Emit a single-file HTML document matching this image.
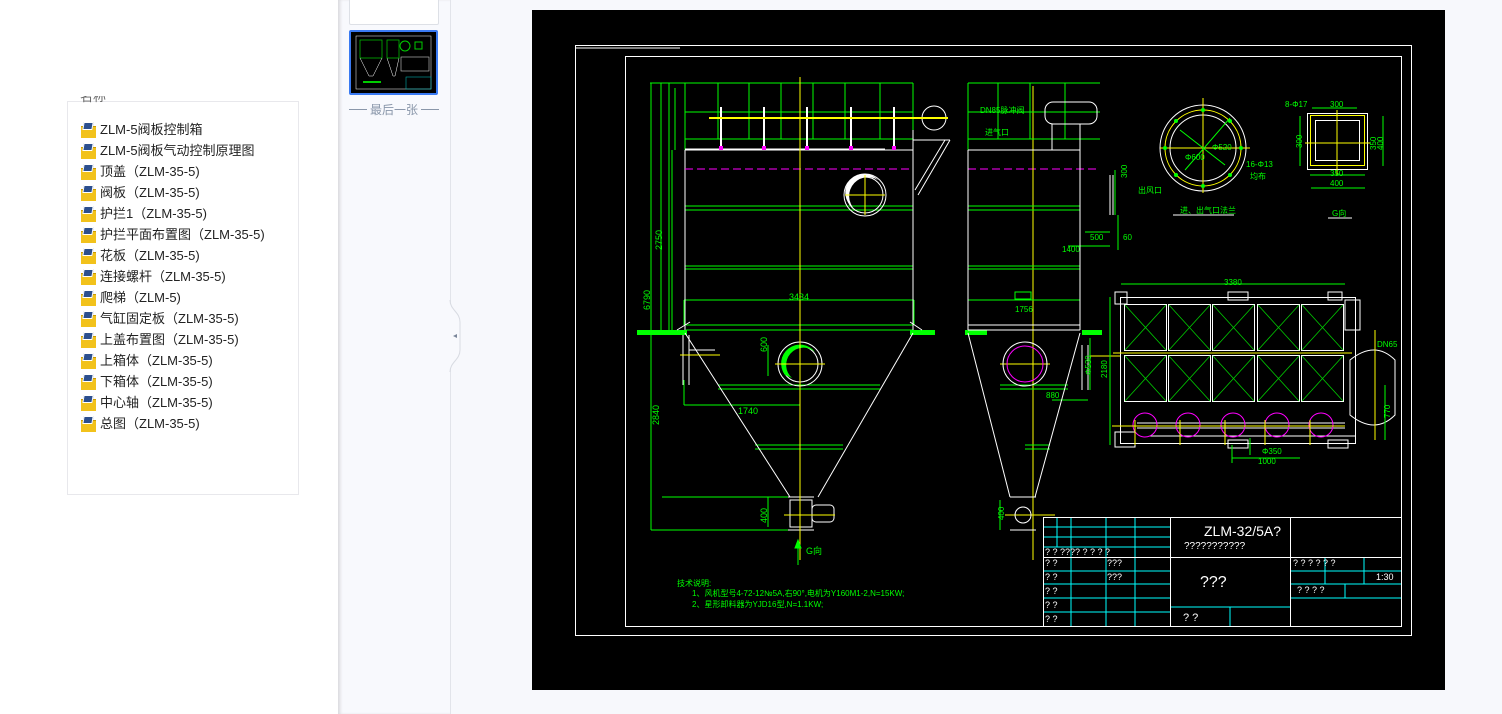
<!DOCTYPE html>
<html><head><meta charset="utf-8"><style>
body{margin:0;width:1502px;height:714px;overflow:hidden;background:#f7f8fc;font-family:"Liberation Sans","Noto Sans CJK SC",sans-serif;position:relative}
.left{position:absolute;left:0;top:0;width:338px;height:714px;background:#fff}
.card{position:absolute;left:67px;top:101px;width:230px;height:392px;border:1px solid #e8e8ec;background:#fff}
.hdr{position:absolute;left:80px;top:96px;width:40px;height:8px;overflow:hidden;font-size:13px;color:#666;line-height:13px}
.hdr span{position:relative;top:-6px}
.item{position:absolute;left:81px;height:20px;font-size:13px;color:#222;line-height:20px;white-space:nowrap}
.item i{display:inline-block;width:15px;height:15px;vertical-align:-3px;margin-right:4px;position:relative}
.item i:before{content:"";position:absolute;left:0;top:4px;width:15px;height:11px;background:#f2c21b;border-top:1px solid #c99a00}
.item i:after{content:"";position:absolute;left:2px;top:0;width:8px;height:6px;background:#2c4f8e;border:1px solid #fff;transform:skewX(-10deg)}
.thumbs{position:absolute;left:338px;top:0;width:112px;height:714px;background:#f8f9fd;box-shadow:inset 3px 0 3px -1px #d8d8dc}
.sep{position:absolute;left:450px;top:0;width:1px;height:714px;background:#e2e4ea}
</style></head><body>
<div class="left">
 <div class="card"></div>
 <div class="hdr"><span>名称</span></div>
 <div class="item" style="top:120px"><i></i>ZLM-5阀板控制箱</div>
 <div class="item" style="top:141px"><i></i>ZLM-5阀板气动控制原理图</div>
 <div class="item" style="top:162px"><i></i>顶盖（ZLM-35-5)</div>
 <div class="item" style="top:183px"><i></i>阀板（ZLM-35-5)</div>
 <div class="item" style="top:204px"><i></i>护拦1（ZLM-35-5)</div>
 <div class="item" style="top:225px"><i></i>护拦平面布置图（ZLM-35-5)</div>
 <div class="item" style="top:246px"><i></i>花板（ZLM-35-5)</div>
 <div class="item" style="top:267px"><i></i>连接螺杆（ZLM-35-5)</div>
 <div class="item" style="top:288px"><i></i>爬梯（ZLM-5)</div>
 <div class="item" style="top:309px"><i></i>气缸固定板（ZLM-35-5)</div>
 <div class="item" style="top:330px"><i></i>上盖布置图（ZLM-35-5)</div>
 <div class="item" style="top:351px"><i></i>上箱体（ZLM-35-5)</div>
 <div class="item" style="top:372px"><i></i>下箱体（ZLM-35-5)</div>
 <div class="item" style="top:393px"><i></i>中心轴（ZLM-35-5)</div>
 <div class="item" style="top:414px"><i></i>总图（ZLM-35-5)</div>
</div>
<div class="thumbs">
 <div style="position:absolute;left:11px;top:-2px;width:88px;height:25px;background:#fff;border:1px solid #dde0e6;border-radius:2px"></div>
 <div style="position:absolute;left:11px;top:30px;width:85px;height:61px;background:#000;border:2px solid #3a7af2;border-radius:2px">
  <svg width="85" height="61" viewBox="0 0 85 61"><rect x="5" y="4" width="75" height="53" fill="none" stroke="#fff" stroke-width=".5"/><rect x="9" y="8" width="22" height="18" fill="none" stroke="#0c0" stroke-width=".7"/><path d="M9 26 L18 44 L22 44 L31 26 M36 26 L42 44 L44 44 L48 26" stroke="#fff" stroke-width=".5" fill="none"/><rect x="36" y="8" width="12" height="18" fill="none" stroke="#0c0" stroke-width=".7"/><circle cx="54" cy="14" r="5" fill="none" stroke="#0c0"/><rect x="64" y="10" width="7" height="7" fill="none" stroke="#0c0"/><rect x="50" y="25" width="28" height="14" fill="none" stroke="#ccc" stroke-width=".6"/><rect x="55" y="45" width="25" height="12" fill="none" stroke="#0aa" stroke-width=".6"/><path d="M12 50 H30" stroke="#0c0" stroke-width="2"/></svg>
 </div>
 <div style="position:absolute;left:10px;top:102px;width:92px;text-align:center;font-size:12px;color:#8a97aa;line-height:16px"><span style="display:inline-block;width:18px;height:1px;background:#8a97aa;vertical-align:4px"></span> 最后一张 <span style="display:inline-block;width:18px;height:1px;background:#8a97aa;vertical-align:4px"></span></div>
</div>
<div class="sep"></div>
<svg style="position:absolute;left:448px;top:300px" width="16" height="80"><path d="M2 0 C2 10 12 12 12 22 V50 C12 60 2 62 2 72" fill="#f8f9fd" stroke="#d8dbe2"/><path d="M9 34 L5 36 L9 38Z" fill="#7a8599"/></svg>

<svg style="position:absolute;left:532px;top:10px" width="913" height="680" viewBox="532 10 913 680" font-family="Liberation Sans, Noto Sans CJK SC, sans-serif">
<rect x="532" y="10" width="913" height="680" fill="#000"/>
<g fill="none" stroke="#fff" stroke-width="1">
<rect x="575.5" y="45.5" width="836" height="590"/>
<rect x="625.5" y="56.5" width="776" height="570"/>
<path d="M575 48 H680"/>
</g>
<g fill="none" stroke="#0f0" stroke-width="1">
<path d="M650 83 H913 M685 112 H913 M685 139 H913"/>
<path d="M718 83V139 M749 83V139 M781 83V139 M813 83V139 M845 83V139 M880 83V139 M913 83V139 M685 83V150"/>
<path d="M651 83V530 M661 83V330 M669 83V330 M672 150V330 M675 88V150"/>
<path d="M685 206H913 M685 210H913 M685 266H913 M685 269H913 M684 300H914 M684 300V325 M914 300V325"/>
<path d="M718 385H880 M718 389H880 M755 445H843 M755 449H843"/>
<path d="M651 530H790 M662 497H790 M684 405H800 M684 380V405 M768 345V376 M768 497V527"/>
<path d="M686 325H913 M686 330H913"/>
</g>
<g fill="#0f0"><rect x="637" y="330" width="50" height="5"/><rect x="910" y="330" width="25" height="5"/><rect x="965" y="330" width="22" height="5"/><rect x="1082" y="330" width="20" height="5"/></g>
<g fill="none" stroke="#fff" stroke-width="1">
<path d="M685 150H913 M685 150V330 M913 150V330 M685 149H885"/>
<path d="M913 130V195 M913 140H950 M950 140L918 195 M945 140L915 190"/>
<circle cx="934" cy="118" r="12"/>
<circle cx="865" cy="195" r="21"/><circle cx="865" cy="195" r="18"/>
<path d="M685 333L790 497 M913 333L818 497 M677 330L690 322 M922 330L910 322"/>
<path d="M683 335V385 M689 335V385 M689 350H715"/>
<circle cx="800" cy="364" r="22"/><circle cx="800" cy="364" r="18"/>
<rect x="790" y="500" width="22" height="27"/><path d="M788 497H814 M788 530H814"/>
<rect x="812" y="505" width="22" height="17" rx="4"/>
</g>
<path d="M785 375 A18 18 0 0 1 815 352 A15 15 0 0 0 792 378Z" fill="#0f0"/>
<path d="M850 205 A18 18 0 0 1 878 180 A15 15 0 0 0 858 212Z" fill="#fff"/>
<g stroke="#fff" stroke-width="2"><path d="M721 107V148 M764 107V148 M807 107V148 M851 107V148 M894 107V148"/></g>
<g fill="#f0f"><rect x="719" y="146" width="4" height="4"/><rect x="762" y="146" width="4" height="4"/><rect x="805" y="146" width="4" height="4"/><rect x="849" y="146" width="4" height="4"/><rect x="892" y="146" width="4" height="4"/></g>
<path d="M685 169H913 M968 169H1100" stroke="#f0f" stroke-dasharray="8 4"/>
<g stroke="#ff0" stroke-width="1" fill="none">
<path d="M709 118H948" stroke-width="2"/>
<path d="M800 77V560 M845 195H885 M865 175V215 M775 364H825 M680 355H720 M784 515H835"/>
<path d="M1033 86V560 M1000 364H1050 M1090 356H1120 M1005 515H1055"/>
</g>
<path d="M798 540V565 M798 540L795 548H801Z" stroke="#0f0" fill="#0f0"/>
<g fill="#0f0" font-size="9">
<text transform="translate(650,310) rotate(-90)">6790</text>
<text transform="translate(662,250) rotate(-90)">2750</text>
<text transform="translate(659,425) rotate(-90)">2840</text>
<text transform="translate(767,352) rotate(-90)">600</text>
<text transform="translate(767,523) rotate(-90)">400</text>
<text x="789" y="300">3434</text>
<text x="738" y="414">1740</text>
<text x="806" y="554">G向</text>
<text x="677" y="586" font-size="8">技术说明:</text>
<text x="692" y="596" font-size="8">1、风机型号4-72-12№5A,右90°,电机为Y160M1-2,N=15KW;</text>
<text x="692" y="607" font-size="8">2、星形卸料器为YJD16型,N=1.1KW;</text>
</g>
<g fill="none" stroke="#0f0">
<path d="M968 83H1100 M968 112H1100 M968 139H1100 M968 83V150 M998 83V139 M1030 83V139 M1065 83V139"/>
<path d="M968 206H1080 M968 210H1080 M968 266H1080 M968 269H1080 M968 300H1080 M1080 300V325 M1068 246H1110 M1085 232H1110"/>
<path d="M1115 170V215 M1118 215V250 M1000 385H1068 M1000 389H1068 M1025 445H1050 M1025 449H1050 M1090 338V390 M1052 400H1088 M1000 500V530"/>
<rect x="1015" y="292" width="16" height="7"/>
</g>
<g fill="none" stroke="#fff">
<path d="M968 150H1080 M968 150V330 M1080 150V330 M1110 175V215 M1113 175V215"/>
<path d="M968 333L1010 497 M1080 333L1035 497 M968 325H1080 M968 330H1080"/>
<circle cx="1025" cy="364" r="22"/><circle cx="1025" cy="364" r="18" stroke="#f0f"/>
<path d="M1082 345V390 M1088 345V390"/>
<rect x="1045" y="102" width="52" height="22" rx="8"/><path d="M1052 124V150 M1080 124V150"/>
<circle cx="1023" cy="515" r="8"/><path d="M1010 497H1036 M1010 530H1036"/>
</g>
<g fill="#0f0" font-size="8">
<text x="980" y="113">DN85脉冲阀</text><text x="985" y="135">进气口</text>
<text transform="translate(1127,178) rotate(-90)">300</text>
<text x="1090" y="240">500</text><text x="1123" y="240">60</text>
<text x="1062" y="252">1400</text><text x="1015" y="312">1756</text>
<text transform="translate(1091,375) rotate(-90)">Φ530</text>
<text x="1046" y="398">880</text>
<text transform="translate(1004,520) rotate(-90)">400</text>
<text x="1138" y="193">出风口</text>
</g>
<g fill="none">
<circle cx="1203" cy="148" r="43" stroke="#fff"/><circle cx="1203" cy="148" r="38" stroke="#ff0"/><circle cx="1203" cy="148" r="33" stroke="#fff"/>
<path d="M1160 148H1250 M1203 98V193" stroke="#ff0"/>
<path d="M1180 130L1225 165 M1185 170L1230 118" stroke="#0f0"/>
<path d="M1173 215H1234" stroke="#fff"/>
<rect x="1310.5" y="115.5" width="54" height="50" stroke="#ff0"/><rect x="1315.5" y="120.5" width="44" height="40" stroke="#fff"/><rect x="1307.5" y="113.5" width="60" height="56" stroke="#fff"/>
<path d="M1337 110V175 M1305 143H1370" stroke="#ff0"/>
<path d="M1311 188H1365 M1312 108H1357 M1300 116V166 M1383 116V166 M1310 175H1365" stroke="#0f0"/>
<path d="M1328 218H1352" stroke="#fff"/>
</g>
<g fill="#0f0"><circle cx="1203" cy="110" r="2"/><circle cx="1203" cy="186" r="2"/><circle cx="1165" cy="148" r="2"/><circle cx="1241" cy="148" r="2"/><circle cx="1176" cy="121" r="2"/><circle cx="1230" cy="121" r="2"/><circle cx="1176" cy="175" r="2"/><circle cx="1230" cy="175" r="2"/></g>
<g fill="#0f0" font-size="8">
<text x="1185" y="160">Φ600</text><text x="1212" y="150">Φ520</text><text x="1246" y="167">16-Φ13</text><text x="1250" y="179">均布</text>
<text x="1180" y="213">进、出气口法兰</text>
<text x="1285" y="107">8-Φ17</text><text x="1330" y="107">300</text>
<text transform="translate(1302,148) rotate(-90)">300</text><text transform="translate(1376,150) rotate(-90)">350</text><text transform="translate(1383,150) rotate(-90)">400</text>
<text x="1330" y="176">350</text><text x="1330" y="186">400</text><text x="1332" y="216">G向</text>
</g>
<g fill="none" stroke="#fff">
<rect x="1120.5" y="297.5" width="235" height="146"/>
<rect x="1115" y="292" width="12" height="12"/><rect x="1228" y="292" width="20" height="8"/><rect x="1328" y="292" width="14" height="8"/>
<rect x="1345" y="300" width="15" height="30"/>
<rect x="1115" y="432" width="20" height="15"/><rect x="1228" y="440" width="20" height="8"/><rect x="1328" y="440" width="20" height="8"/>
<rect x="1124.5" y="304.5" width="42" height="46"/><rect x="1168.5" y="304.5" width="42" height="46"/><rect x="1212.5" y="304.5" width="42" height="46"/><rect x="1257.5" y="304.5" width="42" height="46"/><rect x="1301.5" y="304.5" width="42" height="46"/>
<rect x="1124.5" y="355.5" width="42" height="46"/><rect x="1168.5" y="355.5" width="42" height="46"/><rect x="1212.5" y="355.5" width="42" height="46"/><rect x="1257.5" y="355.5" width="42" height="46"/><rect x="1301.5" y="355.5" width="42" height="46"/>
<path d="M1137 423H1345 M1137 428H1345 M1150 436H1355"/>
<path d="M1350 360 Q1375 340 1395 360 V415 Q1375 435 1350 415Z"/>
</g>
<g stroke="#0c0" stroke-width=".8">
<path d="M1125 305L1166 350M1166 305L1125 350M1169 305L1210 350M1210 305L1169 350M1213 305L1254 350M1254 305L1213 350M1258 305L1299 350M1299 305L1258 350M1302 305L1343 350M1343 305L1302 350"/>
<path d="M1125 356L1166 401M1166 356L1125 401M1169 356L1210 401M1210 356L1169 401M1213 356L1254 401M1254 356L1213 401M1258 356L1299 401M1299 356L1258 401M1302 356L1343 401M1343 356L1302 401"/>
</g>
<g fill="none" stroke="#f0f"><circle cx="1145" cy="425" r="12"/><circle cx="1188" cy="425" r="12"/><circle cx="1233" cy="425" r="12"/><circle cx="1277" cy="425" r="12"/><circle cx="1321" cy="425" r="12"/></g>
<g stroke="#ff0" fill="none"><path d="M1113 353H1352 M1112 426H1345 M1375 330V440 M1135 420V445 M1180 420V445 M1225 420V445 M1265 420V445 M1310 420V445"/></g>
<g stroke="#0f0" fill="none"><path d="M1121 284H1345 M1110 297V445 M1385 385V440 M1232 445V463 M1232 458H1300 M1250 438V455"/></g>
<g fill="#0f0" font-size="8"><text x="1224" y="285">3380</text><text transform="translate(1107,378) rotate(-90)">2180</text><text x="1377" y="347">DN65</text><text transform="translate(1390,418) rotate(-90)">770</text><text x="1258" y="464">1000</text><text x="1262" y="454">Φ350</text></g>
<g fill="none" stroke="#0ff" stroke-width="1">
<path d="M1043 527H1170 M1043 537H1170 M1043 547H1170 M1043 571H1170 M1043 584H1170 M1043 598H1170 M1043 612H1170"/>
<path d="M1057 517V547 M1071 517V626 M1106 517V626 M1135 517V626"/>
<path d="M1170 607H1290 M1230 607V626"/>
<path d="M1290 571H1401 M1290 584H1401 M1290 598H1401 M1325 557V584 M1364 557V584 M1345 584V598"/>
</g>
<g fill="none" stroke="#fff" stroke-width="1">
<path d="M1043.5 517V626 M1043 517.5H1401 M1043 557.5H1170 M1170.5 517V626 M1290.5 517V626 M1170 557.5H1401"/>
</g>
<g fill="#fff" font-size="9">
<text x="1204" y="536" font-size="14">ZLM-32/5A?</text>
<text x="1184" y="549" font-size="10">???????????</text>
<text x="1200" y="587" font-size="16">???</text>
<text x="1183" y="621" font-size="11">?    ?</text>
<text x="1045" y="555">? ? ????  ?  ?  ?  ?</text>
<text x="1045" y="566">?   ?</text><text x="1107" y="566">???</text>
<text x="1045" y="580">?   ?</text><text x="1107" y="580">???</text>
<text x="1045" y="594">?   ?</text><text x="1045" y="608">?   ?</text><text x="1045" y="622">?   ?</text>
<text x="1293" y="566">?     ?   ?     ?  ?     ?</text>
<text x="1376" y="580">1:30</text>
<text x="1297" y="593">?           ?   ?           ?</text>
</g>
</svg>
</body></html>
